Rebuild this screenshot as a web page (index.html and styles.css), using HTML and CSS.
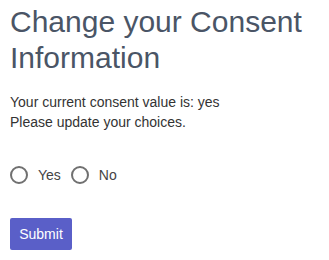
FILE: index.html
```html
<!DOCTYPE html>
<html lang="en">
<head>
    <meta charset="UTF-8">
    <meta name="viewport" content="width=device-width, initial-scale=1.0">
    <title>Consent</title>
    <link rel="stylesheet" href="styles.css">
</head>
<body>
    <div class="consent">
        <h1 class="title">Change your Consent Information</h1>
        <p class="status">Your current consent value is: yes<br>Please update your choices.</p>
        <form class="choices">
            <div class="options">
                <label class="option"><input type="radio" name="consent" value="yes"><span>Yes</span></label>
                <label class="option"><input type="radio" name="consent" value="no"><span>No</span></label>
            </div>
            <button type="button" class="submit">Submit</button>
        </form>
    </div>
</body>
</html>
```

FILE: styles.css
```css
body {
    margin: 0;
    font-family: "Liberation Sans", Arial, sans-serif;
    color: #333;
    background: #fff;
}

.consent {
    padding: 4px 10px;
}

.title {
    margin: 0;
    font-size: 30px;
    font-weight: normal;
    line-height: 36px;
    color: #4a5566;
}

.status {
    margin: 16px 0 0;
    font-size: 14px;
    line-height: 20px;
}

.options {
    display: flex;
    align-items: center;
    margin-top: 34px;
}

.option {
    display: flex;
    align-items: center;
    font-size: 14px;
    color: #444;
    margin-right: 10px;
}

.option input {
    appearance: none;
    width: 18px;
    height: 18px;
    margin: 0 10px 0 0;
    border: 2px solid #707070;
    border-radius: 50%;
    box-sizing: border-box;
}

.submit {
    margin-top: 34px;
    width: 62px;
    height: 32px;
    border: none;
    border-radius: 2px;
    background: #5a5fc8;
    color: #fff;
    font-family: inherit;
    font-size: 14px;
}
```
